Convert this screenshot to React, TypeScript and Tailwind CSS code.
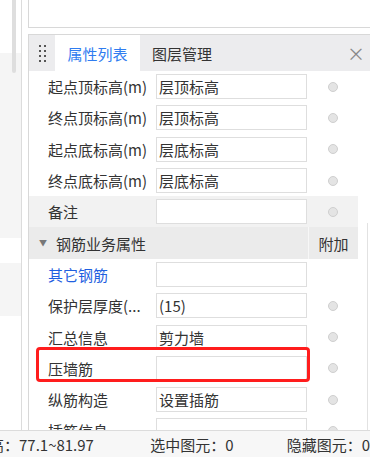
import React from 'react';

type Row = {
  label: string;
  value: string;
  blue?: boolean;
  radio?: boolean;
  shaded?: boolean;
};

const topRows: Row[] = [
  { label: '起点顶标高(m)', value: '层顶标高', radio: true },
  { label: '终点顶标高(m)', value: '层顶标高', radio: true },
  { label: '起点底标高(m)', value: '层底标高', radio: true },
  { label: '终点底标高(m)', value: '层底标高', radio: true },
  { label: '备注', value: '', radio: true, shaded: true },
];

const rebarRows: Row[] = [
  { label: '其它钢筋', value: '', blue: true },
  { label: '保护层厚度(...', value: '(15)', radio: true },
  { label: '汇总信息', value: '剪力墙', radio: true },
  { label: '压墙筋', value: '', radio: true },
  { label: '纵筋构造', value: '设置插筋', radio: true },
  { label: '插筋信息', value: '', radio: true },
];

const PropRow: React.FC<{ row: Row }> = ({ row }) => (
  <div className="flex h-[31.3px] shrink-0 items-center">
    <div className={`flex h-full w-[329px] items-center ${row.shaded ? 'bg-[#f2f2f2]' : ''}`}>
      <div className={`w-[127px] pl-[19px] whitespace-nowrap ${row.blue ? 'text-[#1f5fe0]' : 'text-[#333]'}`}>
        {row.label}
      </div>
      <div className="flex h-[25px] w-[151px] items-center border border-[#dedede] bg-white pl-[2px] text-[#333]">
        {row.value}
      </div>
      <div className="flex w-[51px] justify-center">
        {row.radio && <div className="h-[10px] w-[10px] rounded-full border border-[#cfcfcf] bg-[#e4e4e4]" />}
      </div>
    </div>
  </div>
);

export default function App() {
  return (
    <div className="flex h-[457px] w-[370px] flex-col overflow-hidden bg-white text-[15px] leading-none font-['Noto_Sans_CJK_SC',sans-serif]">
      <div className="flex h-[430px] shrink-0">
        {/* left strip */}
        <div className="flex w-[22px] flex-col border-r border-[#dcdcdc]">
          <div className="relative h-[53px] bg-white">
            <div className="absolute left-[12px] top-0 h-[73px] w-[4px] rounded-b bg-[#dedede]" />
          </div>
          <div className="h-[185px] bg-[#f5f5f5]" />
          <div className="h-[25px] bg-white" />
          <div className="h-[53px] bg-[#f5f5f5]" />
          <div className="flex-1 bg-white" />
        </div>
        <div className="w-[6px] bg-white" />
        {/* right column */}
        <div className="flex flex-1 flex-col">
          <div className="h-[28px] shrink-0 border-b border-l border-[#d8d8d8] bg-white" />
          <div className="h-[6px] shrink-0" />
          <div className="relative flex flex-1 flex-col overflow-hidden border-l border-t border-[#d8d8d8]">
            {/* tabs */}
            <div className="flex h-[36px] shrink-0 items-center bg-[#ececee]">
              <div className="flex w-[26px] justify-center">
                <div className="grid grid-cols-2 gap-x-[3px] gap-y-[3px]">
                  {Array.from({ length: 8 }).map((_, i) => (
                    <div key={i} className="h-[2px] w-[2px] bg-[#555]" />
                  ))}
                </div>
              </div>
              <div className="flex h-full w-[85px] items-center justify-center bg-white text-[#2f7cf0]">属性列表</div>
              <div className="ml-[12px] text-[#333]">图层管理</div>
              <div className="ml-auto mr-[5px] text-[18px] text-[#888]">×</div>
            </div>
            {topRows.map((r) => (
              <PropRow key={r.label} row={r} />
            ))}
            {/* group header */}
            <div className="flex h-[31.3px] shrink-0 items-center">
              <div className="flex h-full w-[329px] items-center bg-[#ebebeb]">
                <div className="flex w-[279px] items-center">
                  <span className="ml-[10px] text-[8px] text-[#777]">▼</span>
                  <span className="ml-[9px] text-[#333]">钢筋业务属性</span>
                </div>
                <div className="flex h-full w-[50px] items-center justify-center border-l border-[#f7f7f7] text-[#333]">附加</div>
              </div>
              <div className="flex-1" />
            </div>
            {rebarRows.map((r) => (
              <PropRow key={r.label} row={r} />
            ))}
            {/* scrollbar track */}
            <div className="absolute right-[2px] top-[188px] bottom-0 w-px bg-[#e2e2e2]" />
            {/* highlight */}
            <div className="absolute left-[7px] top-[312px] h-[35px] w-[274px] rounded-[4px] border-[3px] border-[#ff1d1d]" />
          </div>
        </div>
      </div>
      {/* status bar */}
      <div className="flex h-[27px] shrink-0 items-center border-t border-[#dcdcdc] bg-[#f7f7f7] text-[#333] whitespace-nowrap">
        <span className="ml-[-11px] w-[162px]">高：77.1~81.97</span>
        <span className="w-[137px]">选中图元：0</span>
        <span>隐藏图元：0</span>
      </div>
    </div>
  );
}
